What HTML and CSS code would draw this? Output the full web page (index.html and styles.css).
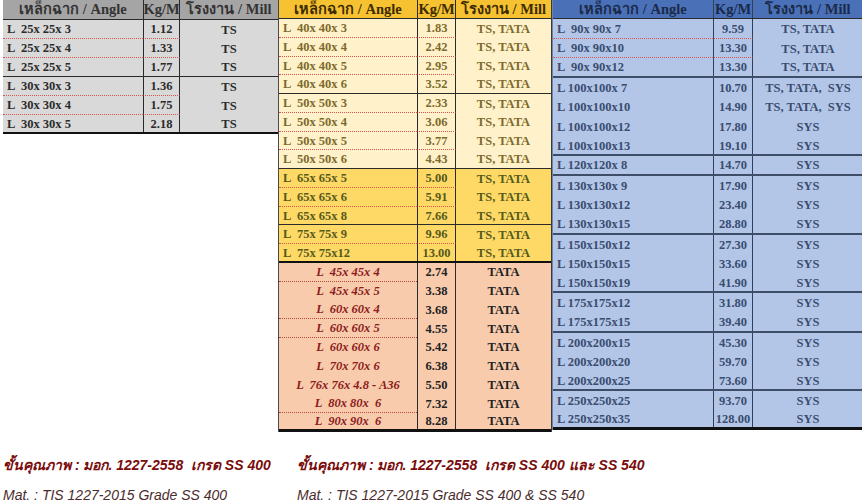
FILE: index.html
```html
<!DOCTYPE html>
<html lang="th">
<head>
<meta charset="utf-8">
<title>เหล็กฉาก / Angle</title>
<link rel="stylesheet" href="styles.css">
</head>
<body>
<div class="tables">
  <div class="tbl t-gray">
    <div class="row head"><div class="c n">เหล็กฉาก / Angle</div><div class="c k">Kg/M</div><div class="c m">โรงงาน / Mill</div></div>
    <div class="row dot"><div class="c n">L  25x 25x 3</div><div class="c k">1.12</div><div class="c m">TS</div></div>
    <div class="row dot"><div class="c n">L  25x 25x 4</div><div class="c k">1.33</div><div class="c m">TS</div></div>
    <div class="row end"><div class="c n">L  25x 25x 5</div><div class="c k">1.77</div><div class="c m">TS</div></div>
    <div class="row dot"><div class="c n">L  30x 30x 3</div><div class="c k">1.36</div><div class="c m">TS</div></div>
    <div class="row dot"><div class="c n">L  30x 30x 4</div><div class="c k">1.75</div><div class="c m">TS</div></div>
    <div class="row last"><div class="c n">L  30x 30x 5</div><div class="c k">2.18</div><div class="c m">TS</div></div>
  </div>

  <div class="tbl t-gold">
    <div class="row head"><div class="c n">เหล็กฉาก / Angle</div><div class="c k">Kg/M</div><div class="c m">โรงงาน / Mill</div></div>
    <div class="row cream dot"><div class="c n">L  40x 40x 3</div><div class="c k">1.83</div><div class="c m">TS, TATA</div></div>
    <div class="row cream dot"><div class="c n">L  40x 40x 4</div><div class="c k">2.42</div><div class="c m">TS, TATA</div></div>
    <div class="row cream dot"><div class="c n">L  40x 40x 5</div><div class="c k">2.95</div><div class="c m">TS, TATA</div></div>
    <div class="row cream end"><div class="c n">L  40x 40x 6</div><div class="c k">3.52</div><div class="c m">TS, TATA</div></div>
    <div class="row cream dot"><div class="c n">L  50x 50x 3</div><div class="c k">2.33</div><div class="c m">TS, TATA</div></div>
    <div class="row cream dot"><div class="c n">L  50x 50x 4</div><div class="c k">3.06</div><div class="c m">TS, TATA</div></div>
    <div class="row cream dot"><div class="c n">L  50x 50x 5</div><div class="c k">3.77</div><div class="c m">TS, TATA</div></div>
    <div class="row cream end"><div class="c n">L  50x 50x 6</div><div class="c k">4.43</div><div class="c m">TS, TATA</div></div>
    <div class="row gold dot"><div class="c n">L  65x 65x 5</div><div class="c k">5.00</div><div class="c m">TS, TATA</div></div>
    <div class="row gold dot"><div class="c n">L  65x 65x 6</div><div class="c k">5.91</div><div class="c m">TS, TATA</div></div>
    <div class="row gold end"><div class="c n">L  65x 65x 8</div><div class="c k">7.66</div><div class="c m">TS, TATA</div></div>
    <div class="row gold dot"><div class="c n">L  75x 75x 9</div><div class="c k">9.96</div><div class="c m">TS, TATA</div></div>
    <div class="row gold end strong"><div class="c n">L  75x 75x12</div><div class="c k">13.00</div><div class="c m">TS, TATA</div></div>
    <div class="row salmon dotn"><div class="c n">L  45x 45x 4</div><div class="c k">2.74</div><div class="c m">TATA</div></div>
    <div class="row salmon"><div class="c n">L  45x 45x 5</div><div class="c k">3.38</div><div class="c m">TATA</div></div>
    <div class="row salmon dotn"><div class="c n">L  60x 60x 4</div><div class="c k">3.68</div><div class="c m">TATA</div></div>
    <div class="row salmon dotn"><div class="c n">L  60x 60x 5</div><div class="c k">4.55</div><div class="c m">TATA</div></div>
    <div class="row salmon"><div class="c n">L  60x 60x 6</div><div class="c k">5.42</div><div class="c m">TATA</div></div>
    <div class="row salmon"><div class="c n">L  70x 70x 6</div><div class="c k">6.38</div><div class="c m">TATA</div></div>
    <div class="row salmon"><div class="c n">L  76x 76x 4.8 - A36</div><div class="c k">5.50</div><div class="c m">TATA</div></div>
    <div class="row salmon dotn"><div class="c n">L  80x 80x  6</div><div class="c k">7.32</div><div class="c m">TATA</div></div>
    <div class="row salmon last"><div class="c n">L  90x 90x  6</div><div class="c k">8.28</div><div class="c m">TATA</div></div>
  </div>

  <div class="tbl t-blue">
    <div class="row head"><div class="c n">เหล็กฉาก / Angle</div><div class="c k">Kg/M</div><div class="c m">โรงงาน / Mill</div></div>
    <div class="row dot"><div class="c n">L  90x 90x 7</div><div class="c k">9.59</div><div class="c m">TS, TATA</div></div>
    <div class="row dot"><div class="c n">L  90x 90x10</div><div class="c k">13.30</div><div class="c m">TS, TATA</div></div>
    <div class="row end"><div class="c n">L  90x 90x12</div><div class="c k">13.30</div><div class="c m">TS, TATA</div></div>
    <div class="row"><div class="c n">L 100x100x 7</div><div class="c k">10.70</div><div class="c m">TS, TATA,  SYS</div></div>
    <div class="row"><div class="c n">L 100x100x10</div><div class="c k">14.90</div><div class="c m">TS, TATA,  SYS</div></div>
    <div class="row"><div class="c n">L 100x100x12</div><div class="c k">17.80</div><div class="c m">SYS</div></div>
    <div class="row end"><div class="c n">L 100x100x13</div><div class="c k">19.10</div><div class="c m">SYS</div></div>
    <div class="row end"><div class="c n">L 120x120x 8</div><div class="c k">14.70</div><div class="c m">SYS</div></div>
    <div class="row"><div class="c n">L 130x130x 9</div><div class="c k">17.90</div><div class="c m">SYS</div></div>
    <div class="row"><div class="c n">L 130x130x12</div><div class="c k">23.40</div><div class="c m">SYS</div></div>
    <div class="row end"><div class="c n">L 130x130x15</div><div class="c k">28.80</div><div class="c m">SYS</div></div>
    <div class="row"><div class="c n">L 150x150x12</div><div class="c k">27.30</div><div class="c m">SYS</div></div>
    <div class="row"><div class="c n">L 150x150x15</div><div class="c k">33.60</div><div class="c m">SYS</div></div>
    <div class="row end"><div class="c n">L 150x150x19</div><div class="c k">41.90</div><div class="c m">SYS</div></div>
    <div class="row"><div class="c n">L 175x175x12</div><div class="c k">31.80</div><div class="c m">SYS</div></div>
    <div class="row end"><div class="c n">L 175x175x15</div><div class="c k">39.40</div><div class="c m">SYS</div></div>
    <div class="row"><div class="c n">L 200x200x15</div><div class="c k">45.30</div><div class="c m">SYS</div></div>
    <div class="row"><div class="c n">L 200x200x20</div><div class="c k">59.70</div><div class="c m">SYS</div></div>
    <div class="row end"><div class="c n">L 200x200x25</div><div class="c k">73.60</div><div class="c m">SYS</div></div>
    <div class="row"><div class="c n">L 250x250x25</div><div class="c k">93.70</div><div class="c m">SYS</div></div>
    <div class="row last"><div class="c n">L 250x250x35</div><div class="c k">128.00</div><div class="c m">SYS</div></div>
  </div>
</div>

<div class="notes">
  <div class="note note-1">
    <p class="th">ขั้นคุณภาพ : มอก. 1227-2558  เกรด SS 400</p>
    <p class="en">Mat. : TIS 1227-2015 Grade SS 400</p>
  </div>
  <div class="note note-2">
    <p class="th">ขั้นคุณภาพ : มอก. 1227-2558  เกรด SS 400 และ SS 540</p>
    <p class="en">Mat. : TIS 1227-2015 Grade SS 400 &amp; SS 540</p>
  </div>
</div>
</body>
</html>
```

FILE: styles.css
```css
* { box-sizing: border-box; }

html, body {
  margin: 0;
  padding: 0;
  background: #ffffff;
}

body {
  width: 862px;
  height: 503px;
  overflow: hidden;
  font-family: "Liberation Serif", "Times New Roman", serif;
}

.tables {
  display: flex;
  align-items: flex-start;
  padding-left: 3px;
}

.tbl {
  display: flex;
  flex-direction: column;
}

.row {
  display: grid;
  grid-template-columns: var(--cols);
  height: var(--rh);
  font-size: 12.5px;
  font-weight: bold;
  line-height: 1;
}

.c {
  display: flex;
  align-items: center;
  white-space: pre;
  padding-top: 1px;
}

.c.n { padding-left: 4px; }
.c.k { justify-content: center; border-right: 1px solid #2a2a2a; border-left: 1px solid #2a2a2a; }
.c.m { justify-content: center; }

.row.head {
  height: var(--hh);
  font-size: 14.5px;
  border-bottom: 1px solid #2a2a2a;
}
.row.head .c { justify-content: center; padding-left: 0; padding-top: 0; }

.row.dot .c.n,
.row.dot .c.k { border-bottom: 1px dotted #d9534f; }
.row.dotn .c.n { border-bottom: 1px dotted #b54a3a; }

.row.end { border-bottom: 1px solid #2a2a2a; }
.row.last { border-bottom: 3px solid #111111; }

/* gray table */
.t-gray {
  --cols: 140px 37px 98px;
  --rh: 19px;
  --hh: 20px;
  background: #d9d9d9;
  color: #2b2b2b;
}
.t-gray .row.head { background: #a5a5a5; color: #333333; }
.t-gray .row.last { border-bottom-width: 2px; }

/* gold table */
.t-gold {
  --cols: 138px 39px 95px;
  --rh: 18.75px;
  --hh: 19px;
  border-left: 1px solid #4a4a4a;
  border-right: 1px solid #3a3a3a;
}
.t-gold .row.head { background: #f7c232; color: #3b2c00; }
.t-gold .row.cream { background: #fff1c9; color: #7d6a2c; }
.t-gold .row.gold { background: #fed966; color: #565a1c; }
.t-gold .row.salmon { background: #f8cbad; color: #222222; }
.t-gold .row.salmon .c.n {
  justify-content: center;
  padding-left: 0;
  font-style: italic;
  color: #8c1c1c;
}
.t-gold .row.strong { border-bottom: 2px solid #111111; }

/* blue table */
.t-blue {
  --cols: 160px 40px 110px;
  --rh: 19.6px;
  --hh: 19px;
  background: #b4c6e7;
  color: #394d70;
  border-left: 1px solid #6e83a8;
}
.t-blue .row.head { background: #4a71b8; color: #1b2a48; }
.t-blue .row.end { border-bottom: 2px solid #3e4d68; }
.t-blue .c.k { border-left-color: #33405a; border-right-color: #33405a; }

/* notes */
.notes {
  display: flex;
  padding-left: 3px;
  margin-top: 23px;
}
.note p {
  margin: 0;
  font-family: "Liberation Sans", Arial, sans-serif;
  font-style: italic;
  font-size: 14px;
  white-space: pre;
}
.note-1 { width: 294px; }
.note .th {
  color: #7a0c0c;
  font-weight: bold;
  height: 30px;
  line-height: 20px;
}
.note .en {
  color: #4a2c2c;
  line-height: 20px;
}
```
